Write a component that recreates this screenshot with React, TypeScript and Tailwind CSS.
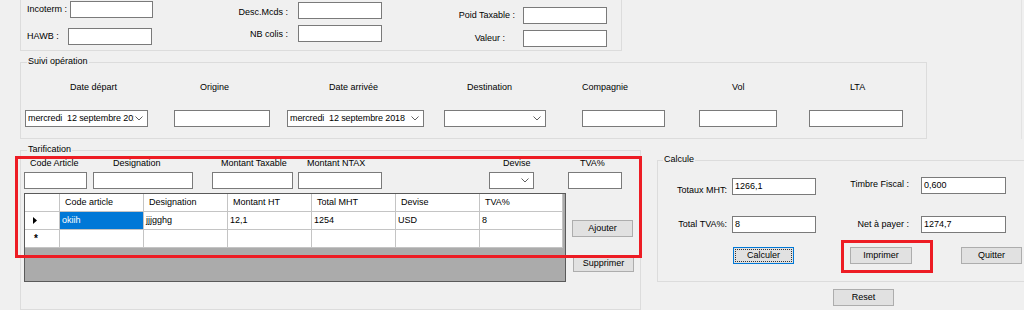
import React from "react";

function Chevron() {
  return (
    <svg width="8" height="5" viewBox="0 0 8 5" className="shrink-0">
      <path d="M0.5 0.5 L4 4 L7.5 0.5" fill="none" stroke="#606060" strokeWidth="1" />
    </svg>
  );
}

function Box({ className = "", children }: { className?: string; children?: React.ReactNode }) {
  return (
    <div
      className={`h-[17px] shrink-0 bg-white border border-[#7a7a7a] flex items-center pl-[2px] overflow-hidden whitespace-pre ${className}`}
    >
      {children}
    </div>
  );
}

function DatePick({ className = "" }: { className?: string }) {
  return (
    <Box className={className}>
      <span className="flex-1 overflow-hidden whitespace-pre tracking-[-0.1px]">mercredi  12 septembre 2018</span>
      <span className="w-[13px] flex justify-start pl-[1px]">
        <Chevron />
      </span>
    </Box>
  );
}

function Combo({ className = "" }: { className?: string }) {
  return (
    <Box className={`justify-end pr-[4px] ${className}`}>
      <Chevron />
    </Box>
  );
}

function Btn({ className = "", children }: { className?: string; children: React.ReactNode }) {
  return (
    <div
      className={`h-[17px] w-[61px] shrink-0 bg-[#e1e1e1] border border-[#adadad] flex items-center justify-center ${className}`}
    >
      {children}
    </div>
  );
}

function Legend({ className = "", children }: { className?: string; children: React.ReactNode }) {
  return <span className={`absolute top-[-7px] px-[1px] bg-[#f0f0f0] ${className}`}>{children}</span>;
}

const cols = ["Code article", "Designation", "Montant HT", "Total MHT", "Devise", "TVA%"];
const row = ["okiih", "jjjgghg", "12,1", "1254", "USD", "8"];

function Grid() {
  return (
    <div className="ml-[3px] w-[542px] h-[89px] shrink-0 bg-[#ababab] border border-[#5a5a5a]">
      <div className="grid grid-cols-[35px_84px_84px_84px_84px_84px_83px]">
        {/* header */}
        <div className="h-[18px] bg-white border-r border-b border-[#c4c4c4]" />
        {cols.map((c) => (
          <div key={c} className="h-[18px] bg-white border-r border-b border-[#c4c4c4] pl-[5px] flex items-center">
            {c}
          </div>
        ))}
        {/* row 1 */}
        <div className="h-[18px] bg-white border-r border-b border-[#c4c4c4] pl-[8px] flex items-center">
          <svg width="4" height="7" viewBox="0 0 4 7">
            <path d="M0 0 L4 3.5 L0 7 Z" fill="#000" />
          </svg>
        </div>
        {row.map((v, i) => (
          <div
            key={i}
            className={`h-[18px] border-r border-b border-[#c4c4c4] pl-[2px] flex items-center ${
              i === 0 ? "bg-[#0078d7] text-white" : "bg-white"
            }`}
          >
            {v}
          </div>
        ))}
        {/* new row */}
        <div className="h-[18px] bg-white border-r border-b border-[#c4c4c4] pl-[9px] flex items-center text-[10px] font-bold">
          *
        </div>
        {row.map((_, i) => (
          <div key={i} className="h-[18px] bg-white border-r border-b border-[#c4c4c4]" />
        ))}
      </div>
    </div>
  );
}

export default function App() {
  return (
    <div className="w-[1024px] h-[310px] overflow-hidden bg-[#f0f0f0] font-['Liberation_Sans',Arial,sans-serif] text-[9px] leading-[11px] text-black">
      <div className="w-[1022px] border-r border-[#e3e3e3]">
        {/* Top group (cut at the top) */}
        <div className="ml-[20px] w-[602px] h-[51px] border-x border-b border-[#dcdcdc] flex">
          <div className="flex flex-col pt-[1px]">
            <div className="flex items-center h-[17px]">
              <span className="w-[49px] pl-[6px]">Incoterm :</span>
              <Box className="w-[83px]" />
            </div>
            <div className="flex items-center h-[17px] mt-[10px]">
              <span className="w-[47px] pl-[6px]">HAWB :</span>
              <Box className="w-[84px]" />
            </div>
          </div>
          <div className="flex flex-col pt-[2px] ml-[77px]">
            <div className="flex items-center h-[17px]">
              <span className="w-[68px] text-right pr-[10px] mt-[3px]">Desc.Mcds :</span>
              <Box className="w-[84px]" />
            </div>
            <div className="flex items-center h-[17px] mt-[6px]">
              <span className="w-[68px] text-right pr-[10px] mt-[2px]">NB colis :</span>
              <Box className="w-[84px]" />
            </div>
          </div>
          <div className="flex flex-col pt-[7px] ml-[58px]">
            <div className="flex items-center h-[17px]">
              <span className="w-[83px] text-right pr-[8px]">Poid Taxable :</span>
              <Box className="w-[84px]" />
            </div>
            <div className="flex items-center h-[17px] mt-[6px]">
              <span className="w-[83px] text-right pr-[18px]">Valeur :</span>
              <Box className="w-[84px]" />
            </div>
          </div>
        </div>

        {/* Suivi opération */}
        <div className="relative mt-[11px] ml-[20px] w-[907px] h-[77px] border border-[#dcdcdc]">
          <Legend className="left-[6px]">Suivi opération</Legend>
          <div className="flex mt-[19px]">
            <span className="ml-[49px] w-[130px]">Date départ</span>
            <span className="w-[129px]">Origine</span>
            <span className="w-[138px]">Date arrivée</span>
            <span className="w-[115px]">Destination</span>
            <span className="w-[150px]">Compagnie</span>
            <span className="w-[118px]">Vol</span>
            <span>LTA</span>
          </div>
          <div className="flex mt-[17px]">
            <DatePick className="ml-[4px] w-[123px]" />
            <Box className="ml-[26px] w-[96px]" />
            <DatePick className="ml-[17px] w-[137px]" />
            <Combo className="ml-[20px] w-[102px]" />
            <Box className="ml-[36px] w-[83px]" />
            <Box className="ml-[34px] w-[78px]" />
            <Box className="ml-[32px] w-[94px]" />
          </div>
        </div>
      </div>

      <div className="flex items-start">
        {/* Tarification */}
        <div className="relative mt-[11px] ml-[20px] w-[621px] h-[160px] shrink-0 border border-[#dcdcdc]">
          <Legend className="left-[6px]">Tarification</Legend>
          <div className="flex mt-[7px]">
            <span className="ml-[9px] w-[83px]">Code Article</span>
            <span className="w-[108px]">Designation</span>
            <span className="w-[86px]">Montant Taxable</span>
            <span className="w-[196px]">Montant NTAX</span>
            <span className="w-[77px]">Devise</span>
            <span>TVA%</span>
          </div>
          <div className="flex mt-[3px]">
            <Box className="ml-[3px] w-[63px]" />
            <Box className="ml-[6px] w-[100px]" />
            <Box className="ml-[19px] w-[81px]" />
            <Box className="ml-[5px] w-[84px]" />
            <Combo className="ml-[107px] w-[45px]" />
            <Box className="ml-[34px] w-[54px]" />
          </div>
          <div className="flex items-start mt-[4px]">
            <Grid />
            <div className="flex flex-col ml-[6px] mt-[27px]">
              <Btn>Ajouter</Btn>
              <Btn className="mt-[18px] ml-[1px]">Supprimer</Btn>
            </div>
          </div>
          {/* red highlight */}
          <div className="absolute left-[-6px] top-[5px] w-[627px] h-[102px] border-[3px] border-[#ed1c24] pointer-events-none" />
        </div>

        {/* Calcule + Reset */}
        <div className="flex flex-col ml-[16px] mt-[21px]">
          <div className="relative w-[370px] h-[122px] shrink-0 border border-[#dcdcdc]">
            <Legend className="left-[5px]">Calcule</Legend>
            <div className="flex flex-col pt-[16px]">
              <div className="flex items-start h-[20px]">
                <span className="w-[69px] text-right mt-[8px]">Totaux MHT:</span>
                <Box className="ml-[5px] mt-[1px] w-[84px]">1266,1</Box>
                <span className="w-[93px] text-right mt-[2px]">Timbre Fiscal :</span>
                <Box className="ml-[12px] w-[85px]">0,600</Box>
              </div>
              <div className="flex items-center h-[17px] mt-[19px]">
                <span className="w-[69px] text-right">Total TVA%:</span>
                <Box className="ml-[5px] w-[84px]">8</Box>
                <span className="w-[93px] text-right">Net à payer :</span>
                <Box className="ml-[12px] w-[85px]">1274,7</Box>
              </div>
              <div className="flex mt-[14px]">
                <Btn className="ml-[75px] !border-[#0078d7] outline-1 outline-dotted outline-[#333] outline-offset-[-3px]">
                  Calculer
                </Btn>
                <Btn className="ml-[56px] w-[62px]">Imprimer</Btn>
                <Btn className="ml-[49px]">Quitter</Btn>
              </div>
            </div>
            {/* red highlight */}
            <div className="absolute left-[183px] top-[79px] w-[92px] h-[33px] border-[3px] border-[#ed1c24] pointer-events-none" />
          </div>
          <Btn className="ml-[176px] mt-[7px]">Reset</Btn>
        </div>
      </div>
    </div>
  );
}
